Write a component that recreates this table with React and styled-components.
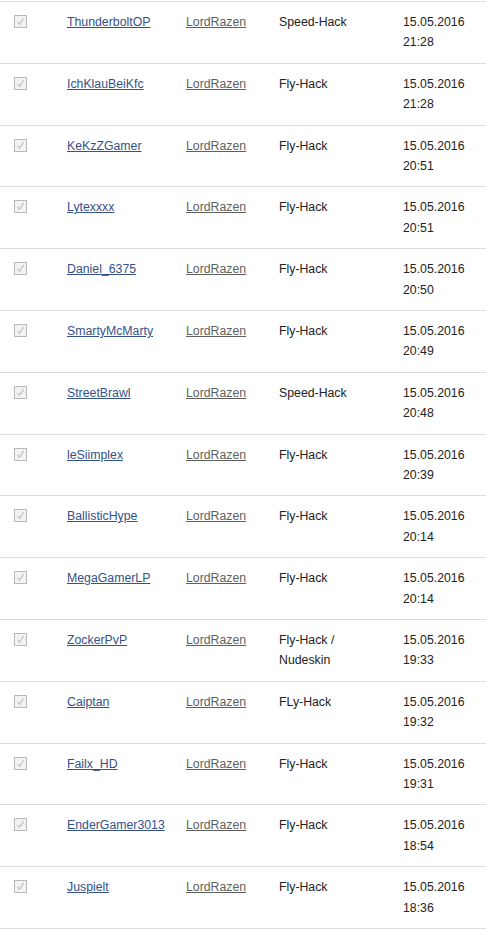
import React from "react";
import styled, { createGlobalStyle } from "styled-components";

const Global = createGlobalStyle`
  html, body { margin: 0; padding: 0; background: #fff; }
  body { font-family: "Liberation Sans", Arial, sans-serif; font-size: 12.3px; color: #222; }
`;

const List = styled.div`
  margin-top: 1px;
  width: 486px;
  border-bottom: 1px solid #dcdcdc;
`;

const Row = styled.div`
  display: grid;
  grid-template-columns: 67px 119px 93px 124px 1fr;
  border-top: 1px solid #dcdcdc;
  padding: 10px 0 10px 0;
  height: 40.8px;
  line-height: 20.4px;
`;

const Cell = styled.div`
  white-space: nowrap;
`;

const CheckCell = styled.div`
  padding-left: 14px;
  padding-top: 3px;
`;

const Box = styled.span`
  display: block;
  width: 11px;
  height: 11px;
  border: 1px solid #b9b9b9;
  background: #f3f3f3;
  position: relative;
  svg { position: absolute; left: 1px; top: 1px; }
`;

const NameLink = styled.a`
  color: #34518a;
  text-decoration: underline;
`;

const ModLink = styled.a`
  color: #5f5f5f;
  text-decoration: underline;
`;

const rows = [
  ["ThunderboltOP", "Speed-Hack", "21:28"],
  ["IchKlauBeiKfc", "Fly-Hack", "21:28"],
  ["KeKzZGamer", "Fly-Hack", "20:51"],
  ["Lytexxxx", "Fly-Hack", "20:51"],
  ["Daniel_6375", "Fly-Hack", "20:50"],
  ["SmartyMcMarty", "Fly-Hack", "20:49"],
  ["StreetBrawl", "Speed-Hack", "20:48"],
  ["leSiimplex", "Fly-Hack", "20:39"],
  ["BallisticHype", "Fly-Hack", "20:14"],
  ["MegaGamerLP", "Fly-Hack", "20:14"],
  ["ZockerPvP", ["Fly-Hack /", "Nudeskin"], "19:33"],
  ["Caiptan", "FLy-Hack", "19:32"],
  ["Failx_HD", "Fly-Hack", "19:31"],
  ["EnderGamer3013", "Fly-Hack", "18:54"],
  ["Juspielt", "Fly-Hack", "18:36"],
];

function Check() {
  return (
    <Box>
      <svg width="9" height="9" viewBox="0 0 9 9">
        <path d="M1.5 4.8 L3.6 7.2 L7.6 1.2" fill="none" stroke="#c4c4c4" strokeWidth="1.2" />
      </svg>
    </Box>
  );
}

export default function App() {
  return (
    <>
      <Global />
      <List>
        {rows.map(([name, reason, time]) => (
          <Row key={name}>
            <CheckCell><Check /></CheckCell>
            <Cell><NameLink href="#">{name}</NameLink></Cell>
            <Cell><ModLink href="#">LordRazen</ModLink></Cell>
            <Cell>
              {Array.isArray(reason) ? (
                <>
                  {reason[0]}
                  <br />
                  {reason[1]}
                </>
              ) : (
                reason
              )}
            </Cell>
            <Cell>
              15.05.2016
              <br />
              {time}
            </Cell>
          </Row>
        ))}
      </List>
    </>
  );
}
